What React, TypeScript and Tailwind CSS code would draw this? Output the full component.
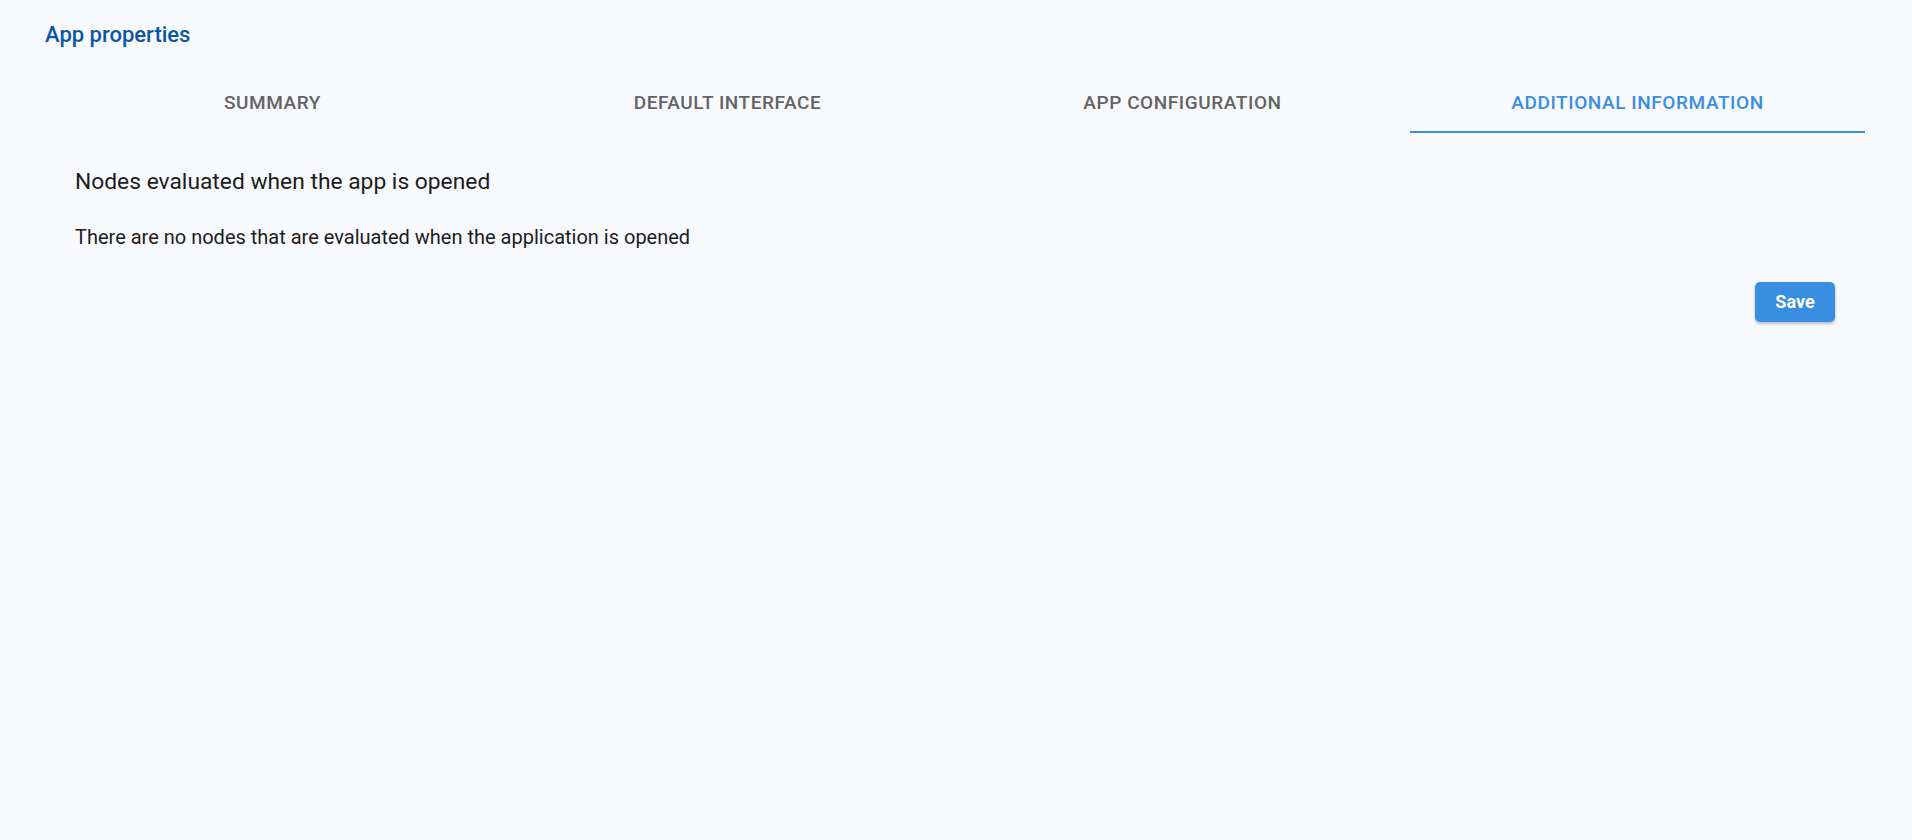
import React from "react";

const tabs = ["Summary", "Default interface", "App configuration", "Additional information"];

export default function App() {
  const active = 3;
  return (
    <div
      className="min-h-screen w-full bg-[#f8f9fd] pl-[45px] pr-[47px]"
      style={{ fontFamily: "Roboto, 'Noto Sans', sans-serif" }}
    >
      <h1 className="pt-[24px] text-[22px] leading-none font-medium text-[#0b56a2]">App properties</h1>
      <div className="mt-[27px] flex">
        {tabs.map((t, i) => (
          <div
            key={t}
            className={
              i === active
                ? "relative flex h-[60px] flex-1 items-center justify-center text-[19px] font-medium uppercase tracking-[0.03em] text-[#3a8ee0]"
                : "relative flex h-[60px] flex-1 items-center justify-center text-[19px] font-medium uppercase tracking-[0.03em] text-[#636363]"
            }
          >
            {t}
            {i === active && <div className="absolute bottom-0 left-0 right-0 h-[2px] bg-[#3a8ee0]" />}
          </div>
        ))}
      </div>
      <div className="px-[30px]">
        <h2 className="mt-[38px] text-[22.8px] leading-none font-normal text-[#1c1c1c]">
          Nodes evaluated when the app is opened
        </h2>
        <p className="mt-[33px] text-[20px] leading-none text-[#1c1c1c]">
          There are no nodes that are evaluated when the application is opened
        </p>
        <div className="mt-[35px] flex justify-end">
          <button className="h-[40px] w-[80px] rounded-[5px] bg-[#388ee0] text-[18px] font-bold text-white shadow-[0_2px_3px_rgba(0,0,0,0.25)]">
            Save
          </button>
        </div>
      </div>
    </div>
  );
}
